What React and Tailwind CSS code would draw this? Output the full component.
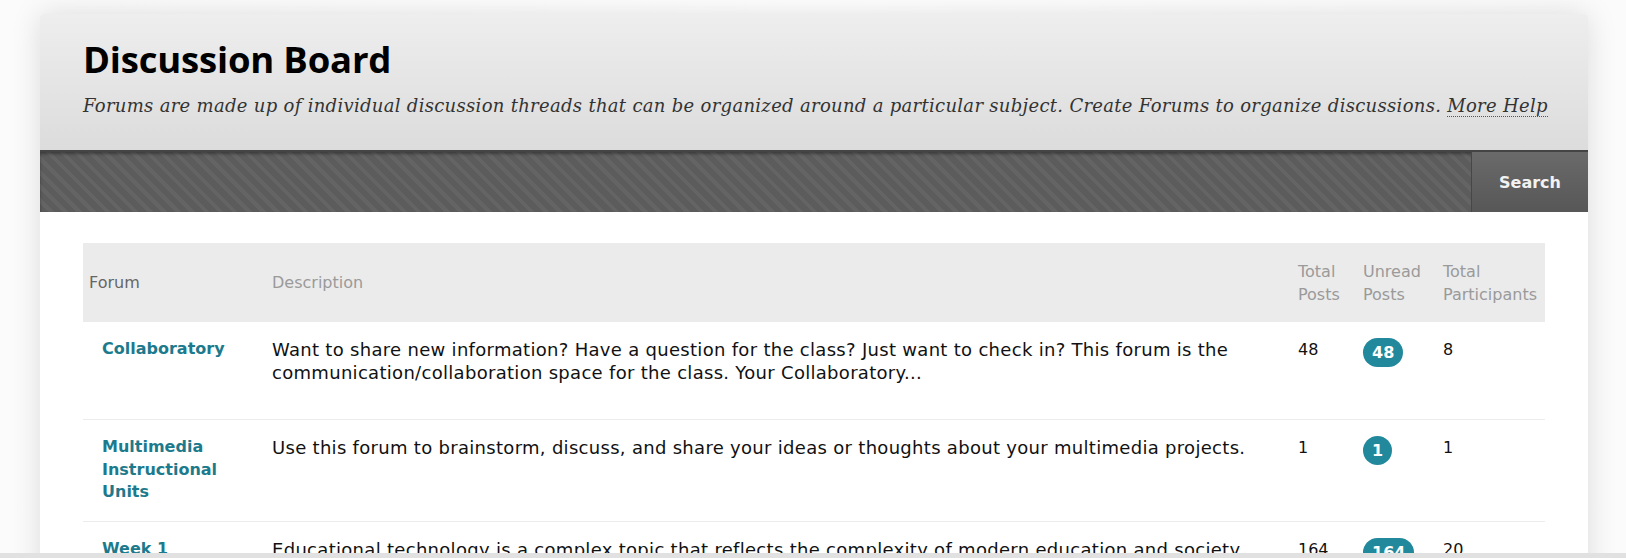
const forums = [
  {
    name: ["Collaboratory"],
    description:
      "Want to share new information? Have a question for the class? Just want to check in? This forum is the communication/collaboration space for the class. Your Collaboratory...",
    total: 48,
    unread: 48,
    participants: 8,
    height: "h-[98px]",
  },
  {
    name: ["Multimedia", "Instructional", "Units"],
    description:
      "Use this forum to brainstorm, discuss, and share your ideas or thoughts about your multimedia projects.",
    total: 1,
    unread: 1,
    participants: 1,
    height: "h-[102px]",
  },
  {
    name: ["Week 1"],
    description:
      "Educational technology is a complex topic that reflects the complexity of modern education and society.",
    total: 164,
    unread: 164,
    participants: 20,
    height: "h-[102px]",
  },
];

const App = () => {
  return (
    <div className="flex h-[558px] w-[1626px] flex-col overflow-hidden bg-white font-['Open_Sans',sans-serif]">
      <div className="flex-1 overflow-hidden bg-gradient-to-r from-[#fbfbfb] via-white to-[#fbfbfb] pl-[40px] pr-[38px] pt-[14px]">
        <div className="rounded-t-[4px] bg-white shadow-[0_0_30px_rgba(0,0,0,0.13)]">
          <section className="h-[136px] rounded-t-[4px] bg-gradient-to-b from-[#eeeeee] to-[#dcdcdc] px-[43px] pt-[25px]">
            <h1 className="text-[36.5px] font-bold leading-[40px] tracking-[-0.2px] text-black">
              Discussion Board
            </h1>
            <p className="mt-[15px] whitespace-nowrap font-['DejaVu_Serif',serif] text-[18px] italic leading-[24px] tracking-[0.3px] text-[#333]">
              Forums are made up of individual discussion threads that can be organized around a particular subject. Create Forums to organize discussions.{" "}
              <span className="border-b border-dotted border-[#555]">More Help</span>
            </p>
          </section>

          <div className="flex h-[62px] border-t-2 border-[#444] bg-[#5c5c5c] bg-[repeating-linear-gradient(45deg,#5c5c5c_0px,#5c5c5c_6px,#646464_6px,#646464_10px)] shadow-[inset_0_2px_3px_rgba(0,0,0,0.35)]">
            <div className="flex-1" />
            <button className="w-[117px] border-l border-[#474747] bg-gradient-to-b from-[#6a6a6a] to-[#575757] pt-[2px] font-['DejaVu_Sans',sans-serif] text-[16px] font-bold text-[#f2f2f2]">
              Search
            </button>
          </div>

          <div className="px-[43px] pt-[31px] font-['DejaVu_Sans',sans-serif]">
            <div className="grid h-[79px] grid-cols-[189px_1026px_65px_80px_1fr] items-center bg-[#ebebeb] text-[16px] leading-[23px] text-[#9a9a9a]">
              <span className="pl-[6px] text-[#666]">Forum</span>
              <span>Description</span>
              <span>
                Total
                <br />
                Posts
              </span>
              <span>
                Unread
                <br />
                Posts
              </span>
              <span className="whitespace-nowrap">
                Total
                <br />
                Participants
              </span>
            </div>

            {forums.map((forum, i) => (
              <div
                key={i}
                className={`grid ${forum.height} grid-cols-[189px_1026px_65px_80px_1fr] items-start border-b border-[#ececec] pt-[16px]`}
              >
                <div className="pl-[19px] pr-[10px] text-[16px] font-bold leading-[22.5px] text-[#1d7a8c]">
                  {forum.name.map((line) => (
                    <div key={line}>{line}</div>
                  ))}
                </div>
                <p className="pr-[20px] text-[18px] leading-[23px] tracking-[0.3px] text-[#111]">
                  {forum.description}
                </p>
                <span className="text-[16px] leading-[23px] text-[#111]">
                  {forum.total}
                </span>
                <span>
                  <span className="inline-flex h-[29px] min-w-[29px] items-center justify-center rounded-full bg-[#22889c] px-[9px] text-[16px] font-bold text-white">
                    {forum.unread}
                  </span>
                </span>
                <span className="text-[16px] leading-[23px] text-[#111]">
                  {forum.participants}
                </span>
              </div>
            ))}
          </div>
        </div>
      </div>
      <div className="h-[5px] shrink-0 bg-[#e1e1e1]" />
    </div>
  );
};

export default App;
